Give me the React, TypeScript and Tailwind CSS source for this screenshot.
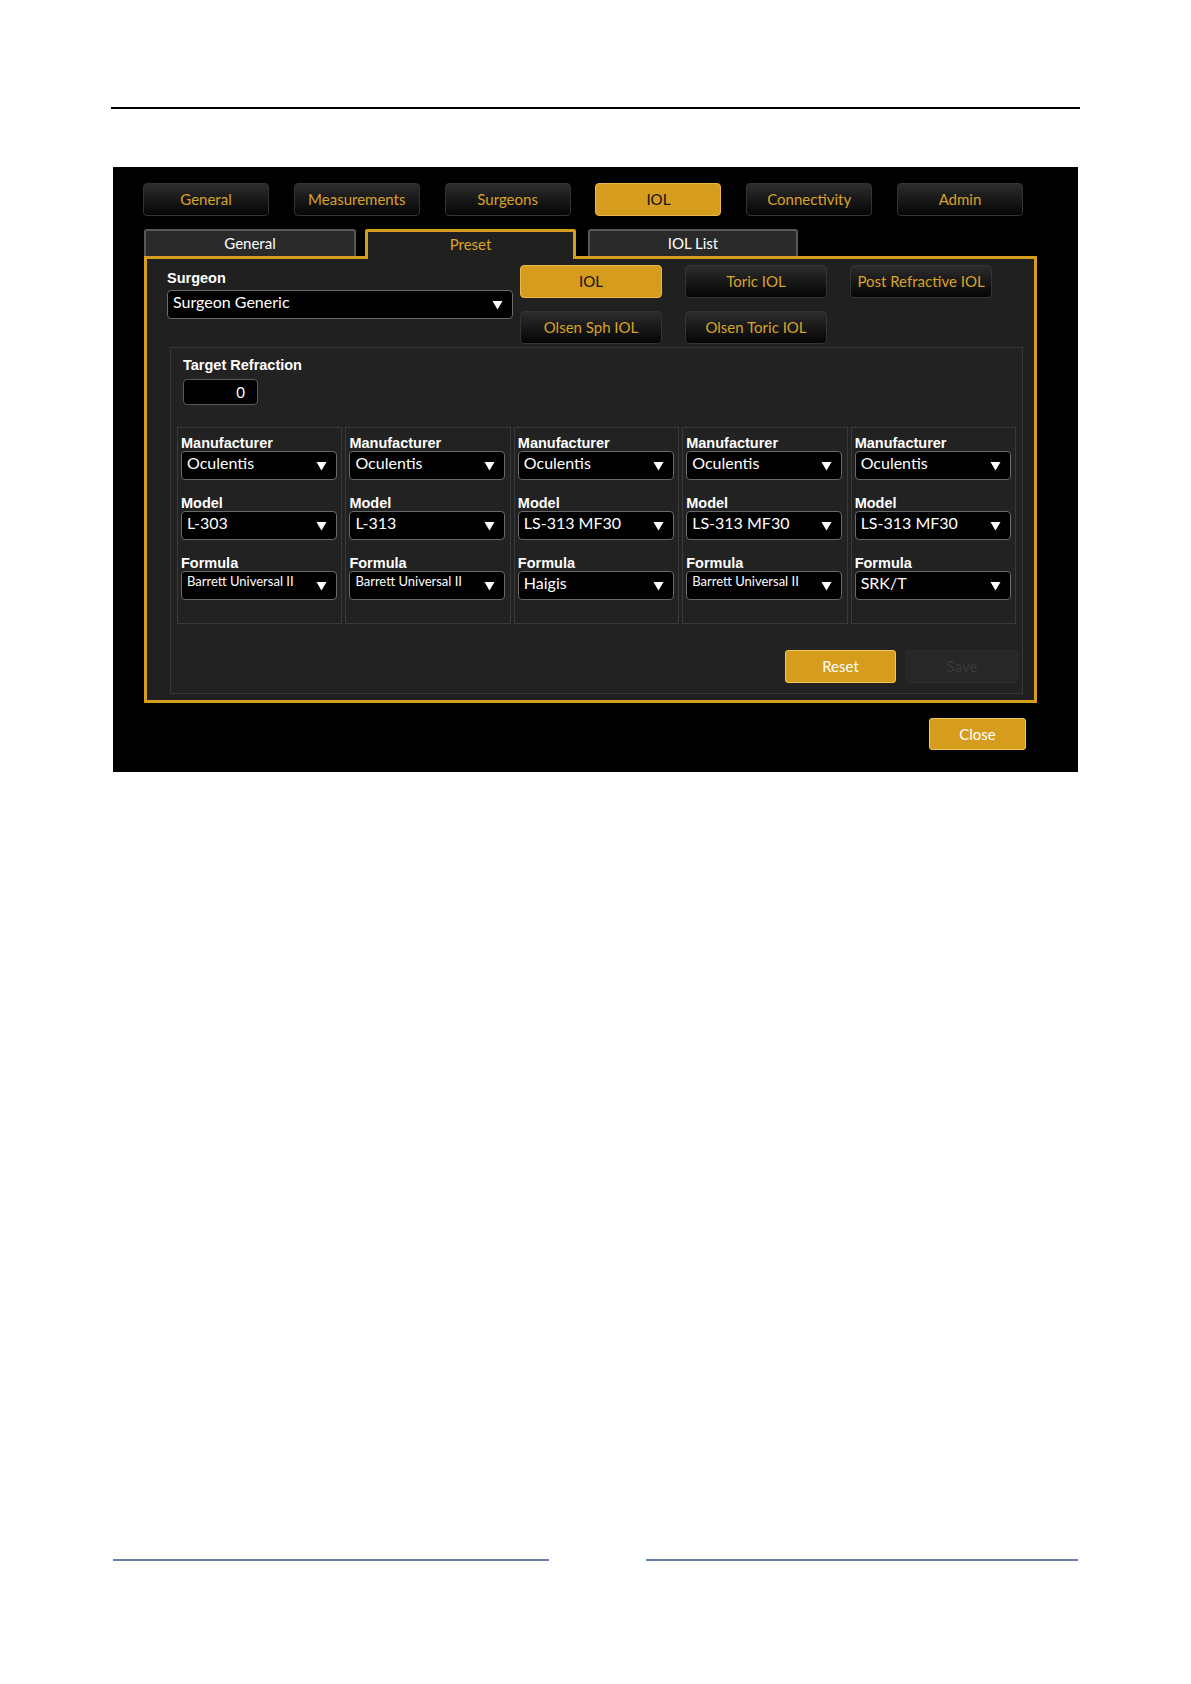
import React from "react";

const ORANGE = "bg-[#d69c1e]";

function Tri() {
  return (
    <svg width="11" height="10" viewBox="0 0 11 10" className="shrink-0">
      <path d="M0.5 1 L10.5 1 L5.5 9.5 Z" fill="#ffffff" />
    </svg>
  );
}

function DarkBtn({ label, w = "w-[126px]" }: { label: string; w?: string }) {
  return (
    <div
      className={`${w} h-[33px] rounded-[4px] border border-[#333] bg-linear-to-b from-[#2d2d2d] to-[#060606] flex items-center justify-center text-[15px] text-[#d9a22a] whitespace-nowrap`}
    >
      {label}
    </div>
  );
}

function ActiveBtn({ label, w = "w-[126px]" }: { label: string; w?: string }) {
  return (
    <div
      className={`${w} h-[33px] rounded-[4px] border border-[#eab84a] ${ORANGE} flex items-center justify-center text-[15px] text-[#111]`}
    >
      {label}
    </div>
  );
}

function Select({ value, small, w }: { value: string; small?: boolean; w: string }) {
  return (
    <div
      className={`${w} h-[29px] rounded-[4px] border border-[#6a6a6a] bg-black flex items-center justify-between pl-[5px] pr-[9px]`}
    >
      <span
        className={`${small ? "text-[13px] -mt-[7px]" : "text-[16px] -mt-[6px]"} text-white whitespace-nowrap`}
      >
        {value}
      </span>
      <Tri />
    </div>
  );
}

const cols = [
  { model: "L-303", formula: "Barrett Universal II", small: true },
  { model: "L-313", formula: "Barrett Universal II", small: true },
  { model: "LS-313 MF30", formula: "Haigis", small: false },
  { model: "LS-313 MF30", formula: "Barrett Universal II", small: true },
  { model: "LS-313 MF30", formula: "SRK/T", small: false },
];

const label = "text-[14.5px] leading-[16px] font-bold text-white font-['Liberation_Sans',Arial,sans-serif]";

export default function App() {
  return (
    <div className="w-[1191px] h-[1684px] bg-white overflow-hidden font-['Lato','Open_Sans',sans-serif]">
      <div className="pt-[107px] pl-[111px]">
        <div className="w-[969px] h-[2px] bg-black" />
      </div>

      <div className="ml-[113px] mt-[58px] w-[965px] h-[605px] bg-black pt-[16px] pl-[30px]">
        {/* main nav */}
        <div className="w-[880px] flex justify-between">
          <DarkBtn label="General" />
          <DarkBtn label="Measurements" />
          <DarkBtn label="Surgeons" />
          <ActiveBtn label="IOL" />
          <DarkBtn label="Connectivity" />
          <DarkBtn label="Admin" />
        </div>

        {/* sub tabs */}
        <div className="mt-[13px] h-[27px] flex items-start pl-[1px]">
          <div className="w-[212px] h-[27px] rounded-t-[3px] border-2 border-b-0 border-[#585858] bg-[#2a2a2a] flex items-center justify-center text-[15px] text-white">
            General
          </div>
          <div className="relative z-10 ml-[9px] w-[211px] h-[30px] rounded-t-[3px] border-[3px] border-b-0 border-[#d69c1e] bg-[#202020] flex items-start pt-[1px] justify-center text-[15px] text-[#d9a22a]">
            Preset
          </div>
          <div className="ml-[12px] w-[210px] h-[27px] rounded-t-[3px] border-2 border-b-0 border-[#585858] bg-[#2a2a2a] flex items-center justify-center text-[15px] text-white">
            IOL List
          </div>
        </div>

        {/* frame */}
        <div className="ml-[1px] w-[893px] h-[447px] border-[3px] border-[#d69c1e] bg-[#202020] pt-[6px] pl-[20px]">
          <div className="flex">
            <div className="w-[346px] pt-[5px]">
              <div className="text-[14.5px] leading-[17px] font-bold text-white font-['Liberation_Sans',Arial,sans-serif]">
                Surgeon
              </div>
              <div className="mt-[3px]">
                <Select value="Surgeon Generic" w="w-[346px]" />
              </div>
            </div>
            <div className="ml-[7px] grid grid-cols-[142px_142px_142px] gap-x-[23px] gap-y-[13px]">
              <ActiveBtn label="IOL" w="w-[142px]" />
              <DarkBtn label="Toric IOL" w="w-[142px]" />
              <DarkBtn label="Post Refractive IOL" w="w-[142px]" />
              <DarkBtn label="Olsen Sph IOL" w="w-[142px]" />
              <DarkBtn label="Olsen Toric IOL" w="w-[142px]" />
            </div>
          </div>

          {/* inner section */}
          <div className="ml-[3px] mt-[3px] w-[853px] h-[347px] border border-[#363636] bg-[#222222] px-[6px] pt-[9px]">
            <div className="pl-[6px]">
              <div className="text-[14.5px] leading-[17px] font-bold text-white font-['Liberation_Sans',Arial,sans-serif]">
                Target Refraction
              </div>
              <div className="mt-[5px] w-[75px] h-[26px] rounded-[4px] border border-[#5a5a5a] bg-black flex items-center justify-end pr-[12px] text-[15px] text-white">
                0
              </div>
            </div>

            <div className="mt-[22px] flex gap-[3px]">
              {cols.map((c, i) => (
                <div key={i} className="w-[166px] h-[197px] border border-[#3a3a3a] px-[3px] pt-[7px]">
                  <div className={label}>Manufacturer</div>
                  <Select value="Oculentis" w="w-[156px]" />
                  <div className={`${label} mt-[15px]`}>Model</div>
                  <Select value={c.model} w="w-[156px]" />
                  <div className={`${label} mt-[15px]`}>Formula</div>
                  <Select value={c.formula} small={c.small} w="w-[156px]" />
                </div>
              ))}
            </div>

            <div className="mt-[26px] flex justify-end gap-[10px] mr-[-2px]">
              <div className="w-[111px] h-[33px] rounded-[3px] border border-[#f2c65a] bg-[#d69c1e] flex items-center justify-center text-[15px] text-white">
                Reset
              </div>
              <div className="w-[112px] h-[33px] rounded-[3px] border border-[#2c2c2c] bg-[#272727] flex items-center justify-center text-[15px] text-[#3a3a3a]">
                Save
              </div>
            </div>
          </div>
        </div>

        {/* close */}
        <div className="mt-[15px] w-[883px] flex justify-end">
          <div className="w-[97px] h-[32px] rounded-[3px] border border-[#f2c65a] bg-[#d69c1e] flex items-center justify-center text-[15px] text-white">
            Close
          </div>
        </div>
      </div>

      <div className="mt-[787px] pl-[113px] flex gap-[97px]">
        <div className="w-[436px] h-[2px] bg-[#6680a3]" />
        <div className="w-[432px] h-[2px] bg-[#6680a3]" />
      </div>
    </div>
  );
}
